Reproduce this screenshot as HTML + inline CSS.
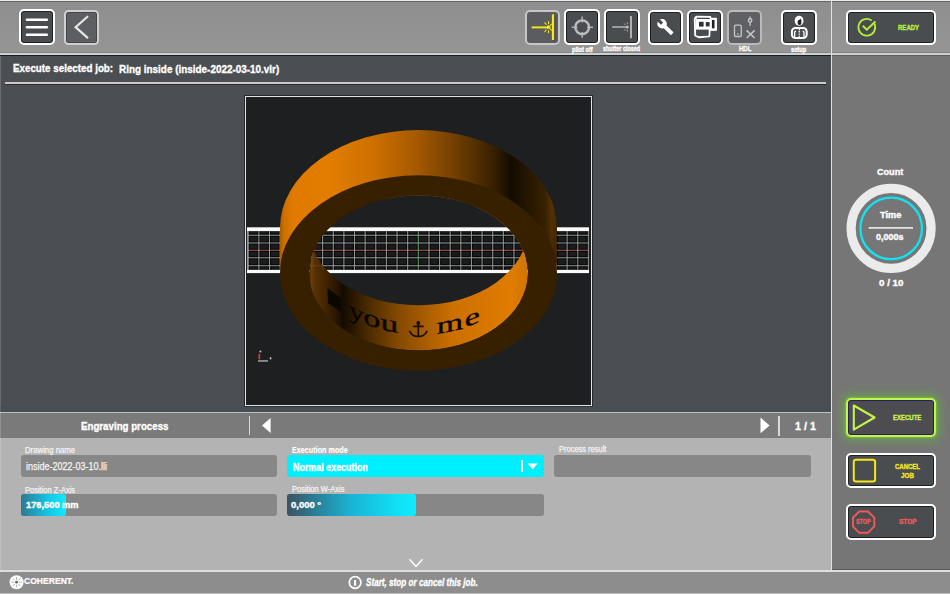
<!DOCTYPE html>
<html><head><meta charset="utf-8">
<style>
*{box-sizing:border-box;margin:0;padding:0}
html,body{width:950px;height:594px;overflow:hidden;background:#8f8f8f;font-family:"Liberation Sans",sans-serif}
.a{position:absolute}
.btn{position:absolute;border:2px solid #fff;border-radius:5px;background:#4a4d50;box-shadow:inset 0 0 0 1px #1e2022}
.dis{border:1.5px solid #c8c8c8;background:#5b5d60;box-shadow:none}
.t{position:absolute;white-space:nowrap;line-height:1;transform-origin:0 0}
</style></head><body>
<!-- header -->
<div class="a" style="left:0;top:0;width:950px;height:53px;background:linear-gradient(#8e8e8e,#959595)"></div>
<div class="a" style="left:0;top:0;width:950px;height:1px;background:#ebebeb"></div>
<div class="a" style="left:0;top:1px;width:950px;height:1px;background:#656565"></div>
<div class="a" style="left:0;top:52px;width:950px;height:1px;background:#858585"></div>
<div class="a" style="left:0;top:53px;width:950px;height:2px;background:#cdd0d0"></div>
<div class="a" style="left:0;top:55px;width:950px;height:1px;background:#1c1f22"></div>

<div class="btn" style="left:19px;top:9px;width:36px;height:36px"></div>
<div class="btn" style="left:64px;top:9.5px;width:35px;height:35.5px;background:#5d5f62;border:2px solid #cfcfcf;border-radius:4.5px;box-shadow:inset 0 0 0 1px #45474a"></div>
<div class="btn dis" style="left:525px;top:9.5px;width:35px;height:35px;background:#5a5c5f;border:2px solid #c6c6c6"></div>
<div class="btn" style="left:564px;top:9px;width:36px;height:36px"></div>
<div class="btn" style="left:604px;top:9px;width:36px;height:36px"></div>
<div class="btn" style="left:648px;top:9.5px;width:35px;height:35.5px"></div>
<div class="btn" style="left:687px;top:9.5px;width:35.5px;height:35.5px"></div>
<div class="btn dis" style="left:727px;top:9.5px;width:35px;height:35px;background:#5e6063;border:2px solid #bababa"></div>
<div class="btn" style="left:781px;top:9.5px;width:36px;height:35.5px"></div>
<div class="btn" style="left:846px;top:9.5px;width:90px;height:35.5px"></div>
<svg class="a" style="left:0;top:0" width="950" height="55">
  <g stroke="#fff" stroke-width="2.6" stroke-linecap="round">
    <line x1="27" y1="19.8" x2="46.8" y2="19.8"/>
    <line x1="27" y1="27.3" x2="46.8" y2="27.3"/>
    <line x1="27" y1="34.8" x2="46.8" y2="34.8"/>
  </g>
  <polyline points="87.4,16.7 75.6,27.2 87.4,37.6" fill="none" stroke="#e6e6e6" stroke-width="2.2" stroke-linecap="round"/>
  <!-- laser -->
  <g stroke="#f2e61c" fill="#f2e61c">
    <line x1="531.7" y1="27.4" x2="547" y2="27.4" stroke-width="2"/>
    <line x1="554.2" y1="14.6" x2="554.2" y2="40.4" stroke="#23236e" stroke-width="2.2"/>
    <line x1="553.1" y1="14.3" x2="553.1" y2="40" stroke-width="2.4"/>
    <circle cx="548.5" cy="27.2" r="1.9" stroke="none"/>
    <g stroke-width="1.1" stroke-linecap="round">
      <line x1="548.5" y1="21.6" x2="548.5" y2="23.6"/>
      <line x1="548.5" y1="30.8" x2="548.5" y2="32.8"/>
      <line x1="544.8" y1="22.8" x2="546.2" y2="24.4"/>
      <line x1="544.8" y1="31.6" x2="546.2" y2="30"/>
      <line x1="551.4" y1="24.2" x2="550.4" y2="25.3"/>
      <line x1="551.4" y1="30.2" x2="550.4" y2="29.1"/>
    </g>
  </g>
  <!-- pilot crosshair -->
  <g stroke="#bdbdbd" fill="none">
    <circle cx="582.2" cy="27.3" r="6.9" stroke-width="2.4"/>
    <g stroke-width="1.3">
      <line x1="582.2" y1="16.4" x2="582.2" y2="22.5"/>
      <line x1="582.2" y1="32.1" x2="582.2" y2="37.8"/>
      <line x1="571.7" y1="27.3" x2="577.5" y2="27.3"/>
      <line x1="587" y1="27.3" x2="593" y2="27.3"/>
    </g>
  </g>
  <!-- shutter -->
  <g stroke="#bdbdbd" fill="#bdbdbd">
    <line x1="612.2" y1="27" x2="626" y2="27" stroke-width="1.4"/>
    <line x1="631" y1="15.9" x2="631" y2="38.2" stroke-width="1.8"/>
    <circle cx="627.3" cy="27" r="1.5" stroke="none"/>
    <g stroke-width="0.9">
      <line x1="627.3" y1="22.5" x2="627.3" y2="24.2"/>
      <line x1="627.3" y1="29.8" x2="627.3" y2="31.5"/>
      <line x1="624.2" y1="23.5" x2="625.4" y2="24.9"/>
      <line x1="624.2" y1="30.5" x2="625.4" y2="29.1"/>
    </g>
  </g>
  <!-- wrench -->
  <path transform="translate(656.6,18.2) scale(0.73)" fill="#fff" d="M22.7 19l-9.1-9.1c.9-2.3.4-5-1.5-6.9-2-2-5-2.4-7.4-1.3L9 6 6 9 1.6 4.7C.4 7.1.9 10.1 2.9 12.1c1.9 1.9 4.6 2.4 6.9 1.5l9.1 9.1c.4.4 1 .4 1.4 0l2.3-2.3c.5-.4.5-1.100.1-1.400z"/>
  <!-- machine -->
  <g fill="none" stroke="#fff" stroke-width="1.9" stroke-linejoin="round">
    <path d="M696.8,16.8 L710.3,16.9 L710.6,18.6 L715.9,18.6 L715.9,29.8 L709.6,29.8 L709.3,36.3 L699.2,37.3 L695.2,35.3 L694.8,19.2 Q695,17.2 696.8,16.8 Z"/>
  </g>
  <rect x="696" y="18.4" width="14.4" height="11.2" fill="#fff"/>
  <rect x="710" y="18" width="6.8" height="12.6" fill="#fff"/>
  <rect x="699" y="21.8" width="4.6" height="4.8" fill="#2e3032"/>
  <rect x="705.8" y="22.1" width="3.8" height="4.3" fill="#2e3032"/>
  <rect x="711.9" y="20" width="2.6" height="8.3" fill="#1e2022"/>
  <rect x="696.4" y="30.2" width="12" height="5.4" fill="#4a4d50"/>
  <line x1="697" y1="18.4" x2="709.6" y2="18.5" stroke="#2e3032" stroke-width="0.9"/>
  <!-- HDL -->
  <g fill="none" stroke="#c6c6c6" stroke-width="1.3">
    <rect x="734.5" y="25.2" width="6.8" height="11.3" rx="1.2"/>
    <line x1="746.6" y1="30.4" x2="754.6" y2="38" stroke-width="1.5"/>
    <line x1="754.6" y1="30.4" x2="746.6" y2="38" stroke-width="1.5"/>
    <line x1="750.1" y1="16.4" x2="750.1" y2="18.4"/>
    <line x1="750.1" y1="22.6" x2="750.1" y2="25.8"/>
    <circle cx="750.1" cy="20.5" r="1.7" stroke-width="1.4"/>
  </g>
  <rect x="737.2" y="33.2" width="1.4" height="1.4" fill="#c6c6c6"/>
  <!-- setup person -->
  <ellipse cx="799.1" cy="20.7" rx="4.4" ry="5" fill="#fff"/>
  <path d="M797.6,21.6 Q797.8,19.8 800.4,19.6 L800.6,18.6 Q801.6,19.2 801.4,21.6 L801.2,24.2 Q799.4,25.8 797.8,24.2 Z" fill="#1e2022"/>
  <rect x="791.9" y="27.9" width="14.8" height="10.2" rx="3.6" fill="none" stroke="#fff" stroke-width="2"/>
  <g stroke="#fff" stroke-width="1.3" fill="none">
    <path d="M794.6,37.4 L794.6,32.6 Q794.6,31.2 796,31.2"/>
    <path d="M804,37.4 L804,32.6 Q804,31.2 802.6,31.2"/>
    <line x1="799.3" y1="28.8" x2="799.3" y2="37.2" stroke-dasharray="1.4 0.9"/>
  </g>
  <!-- ready -->
  <path d="M874.3,23.4 A8.4,8.4 0 1 1 871.7,20.4" fill="none" stroke="#b8ee3a" stroke-width="1.8"/>
  <polyline points="862.8,25.8 866.8,29.6 875.4,21.5" fill="none" stroke="#b8ee3a" stroke-width="1.9"/>
</svg>

<!-- main area -->
<div class="a" style="left:0;top:56px;width:831px;height:356px;background:#4b4e52"></div>
<div class="a" style="left:5px;top:82px;width:821px;height:2px;background:#c8cacb"></div>
<div class="a" style="left:5px;top:84px;width:821px;height:1px;background:#2a2c2e"></div>

<!-- viewport -->
<div class="a" style="left:243.5px;top:94.5px;width:349.5px;height:312.5px;background:#26292c"></div>
<div class="a" style="left:245px;top:96px;width:346.5px;height:309.5px;border:1.5px solid #e2e2e2;background:#1e1f21"></div>
<svg class="a" style="left:247px;top:97px" width="342" height="307" viewBox="247 97 342 307">
<defs>
<linearGradient id="ow" gradientUnits="userSpaceOnUse" x1="279.5" y1="0" x2="557" y2="0">
<stop offset="0" stop-color="#a85a00"/>
<stop offset="0.016" stop-color="#cc7000"/>
<stop offset="0.049" stop-color="#e07a00"/>
<stop offset="0.182" stop-color="#e27d00"/>
<stop offset="0.341" stop-color="#cc7000"/>
<stop offset="0.499" stop-color="#a45800"/>
<stop offset="0.665" stop-color="#643800"/>
<stop offset="0.773" stop-color="#362000"/>
<stop offset="0.835" stop-color="#140c00"/>
<stop offset="0.892" stop-color="#241600"/>
<stop offset="0.957" stop-color="#3a2200"/>
<stop offset="0.982" stop-color="#5a3406"/>
<stop offset="1" stop-color="#4a2a04"/>
</linearGradient>
<linearGradient id="iw" gradientUnits="userSpaceOnUse" x1="309" y1="0" x2="528" y2="0">
<stop offset="0" stop-color="#3a2000"/>
<stop offset="0.01" stop-color="#6a3c06"/>
<stop offset="0.03" stop-color="#553004"/>
<stop offset="0.07" stop-color="#452600"/>
<stop offset="0.125" stop-color="#2a1600"/>
<stop offset="0.155" stop-color="#130b00"/>
<stop offset="0.26" stop-color="#462800"/>
<stop offset="0.411" stop-color="#864a00"/>
<stop offset="0.658" stop-color="#cc7000"/>
<stop offset="0.923" stop-color="#e07c00"/>
<stop offset="1" stop-color="#d07400"/>
</linearGradient>
<clipPath id="cin"><ellipse cx="418.5" cy="273.0" rx="109.5" ry="77.5"/></clipPath>
<linearGradient id="owd" gradientUnits="userSpaceOnUse" x1="500" y1="150" x2="557" y2="270"><stop offset="0" stop-color="#1a0d00" stop-opacity="0"/><stop offset="0.42" stop-color="#1a0d00" stop-opacity="0"/><stop offset="1" stop-color="#1a0d00" stop-opacity="0.3"/></linearGradient>
</defs>
<rect x="247" y="231" width="342" height="39" fill="#1a1c1e"/>
<line x1="247" y1="235.2" x2="589" y2="235.2" stroke="#060707" stroke-width="3.2"/>
<line x1="247" y1="243.0" x2="589" y2="243.0" stroke="#060707" stroke-width="3.2"/>
<line x1="247" y1="257.7" x2="589" y2="257.7" stroke="#060707" stroke-width="3.2"/>
<line x1="247" y1="265.8" x2="589" y2="265.8" stroke="#060707" stroke-width="3.2"/>
<line x1="247" y1="250.3" x2="589" y2="250.3" stroke="#060707" stroke-width="3.2"/>
<line x1="248.22" y1="231" x2="248.22" y2="270" stroke="#060707" stroke-width="3.2"/>
<line x1="258.85" y1="231" x2="258.85" y2="270" stroke="#060707" stroke-width="3.2"/>
<line x1="269.48" y1="231" x2="269.48" y2="270" stroke="#060707" stroke-width="3.2"/>
<line x1="280.11" y1="231" x2="280.11" y2="270" stroke="#060707" stroke-width="3.2"/>
<line x1="290.74" y1="231" x2="290.74" y2="270" stroke="#060707" stroke-width="3.2"/>
<line x1="301.37" y1="231" x2="301.37" y2="270" stroke="#060707" stroke-width="3.2"/>
<line x1="312.00" y1="231" x2="312.00" y2="270" stroke="#060707" stroke-width="3.2"/>
<line x1="322.63" y1="231" x2="322.63" y2="270" stroke="#060707" stroke-width="3.2"/>
<line x1="333.26" y1="231" x2="333.26" y2="270" stroke="#060707" stroke-width="3.2"/>
<line x1="343.89" y1="231" x2="343.89" y2="270" stroke="#060707" stroke-width="3.2"/>
<line x1="354.52" y1="231" x2="354.52" y2="270" stroke="#060707" stroke-width="3.2"/>
<line x1="365.15" y1="231" x2="365.15" y2="270" stroke="#060707" stroke-width="3.2"/>
<line x1="375.78" y1="231" x2="375.78" y2="270" stroke="#060707" stroke-width="3.2"/>
<line x1="386.41" y1="231" x2="386.41" y2="270" stroke="#060707" stroke-width="3.2"/>
<line x1="397.04" y1="231" x2="397.04" y2="270" stroke="#060707" stroke-width="3.2"/>
<line x1="407.67" y1="231" x2="407.67" y2="270" stroke="#060707" stroke-width="3.2"/>
<line x1="418.30" y1="231" x2="418.30" y2="270" stroke="#060707" stroke-width="3.2"/>
<line x1="428.93" y1="231" x2="428.93" y2="270" stroke="#060707" stroke-width="3.2"/>
<line x1="439.56" y1="231" x2="439.56" y2="270" stroke="#060707" stroke-width="3.2"/>
<line x1="450.19" y1="231" x2="450.19" y2="270" stroke="#060707" stroke-width="3.2"/>
<line x1="460.82" y1="231" x2="460.82" y2="270" stroke="#060707" stroke-width="3.2"/>
<line x1="471.45" y1="231" x2="471.45" y2="270" stroke="#060707" stroke-width="3.2"/>
<line x1="482.08" y1="231" x2="482.08" y2="270" stroke="#060707" stroke-width="3.2"/>
<line x1="492.71" y1="231" x2="492.71" y2="270" stroke="#060707" stroke-width="3.2"/>
<line x1="503.34" y1="231" x2="503.34" y2="270" stroke="#060707" stroke-width="3.2"/>
<line x1="513.97" y1="231" x2="513.97" y2="270" stroke="#060707" stroke-width="3.2"/>
<line x1="524.60" y1="231" x2="524.60" y2="270" stroke="#060707" stroke-width="3.2"/>
<line x1="535.23" y1="231" x2="535.23" y2="270" stroke="#060707" stroke-width="3.2"/>
<line x1="545.86" y1="231" x2="545.86" y2="270" stroke="#060707" stroke-width="3.2"/>
<line x1="556.49" y1="231" x2="556.49" y2="270" stroke="#060707" stroke-width="3.2"/>
<line x1="567.12" y1="231" x2="567.12" y2="270" stroke="#060707" stroke-width="3.2"/>
<line x1="577.75" y1="231" x2="577.75" y2="270" stroke="#060707" stroke-width="3.2"/>
<line x1="588.38" y1="231" x2="588.38" y2="270" stroke="#060707" stroke-width="3.2"/>
<line x1="247" y1="235.2" x2="589" y2="235.2" stroke="#959595" stroke-width="1.05"/>
<line x1="247" y1="243.0" x2="589" y2="243.0" stroke="#959595" stroke-width="1.05"/>
<line x1="247" y1="257.7" x2="589" y2="257.7" stroke="#959595" stroke-width="1.05"/>
<line x1="247" y1="265.8" x2="589" y2="265.8" stroke="#959595" stroke-width="1.05"/>
<line x1="247" y1="250.3" x2="589" y2="250.3" stroke="#b05a5a" stroke-width="1.05"/>
<line x1="248.22" y1="231" x2="248.22" y2="270" stroke="#959595" stroke-width="1.05"/>
<line x1="258.85" y1="231" x2="258.85" y2="270" stroke="#959595" stroke-width="1.05"/>
<line x1="269.48" y1="231" x2="269.48" y2="270" stroke="#959595" stroke-width="1.05"/>
<line x1="280.11" y1="231" x2="280.11" y2="270" stroke="#959595" stroke-width="1.05"/>
<line x1="290.74" y1="231" x2="290.74" y2="270" stroke="#959595" stroke-width="1.05"/>
<line x1="301.37" y1="231" x2="301.37" y2="270" stroke="#959595" stroke-width="1.05"/>
<line x1="312.00" y1="231" x2="312.00" y2="270" stroke="#959595" stroke-width="1.05"/>
<line x1="322.63" y1="231" x2="322.63" y2="270" stroke="#959595" stroke-width="1.05"/>
<line x1="333.26" y1="231" x2="333.26" y2="270" stroke="#959595" stroke-width="1.05"/>
<line x1="343.89" y1="231" x2="343.89" y2="270" stroke="#959595" stroke-width="1.05"/>
<line x1="354.52" y1="231" x2="354.52" y2="270" stroke="#959595" stroke-width="1.05"/>
<line x1="365.15" y1="231" x2="365.15" y2="270" stroke="#959595" stroke-width="1.05"/>
<line x1="375.78" y1="231" x2="375.78" y2="270" stroke="#959595" stroke-width="1.05"/>
<line x1="386.41" y1="231" x2="386.41" y2="270" stroke="#959595" stroke-width="1.05"/>
<line x1="397.04" y1="231" x2="397.04" y2="270" stroke="#959595" stroke-width="1.05"/>
<line x1="407.67" y1="231" x2="407.67" y2="270" stroke="#959595" stroke-width="1.05"/>
<line x1="418.30" y1="231" x2="418.30" y2="270" stroke="#5ea060" stroke-width="1.05"/>
<line x1="428.93" y1="231" x2="428.93" y2="270" stroke="#959595" stroke-width="1.05"/>
<line x1="439.56" y1="231" x2="439.56" y2="270" stroke="#959595" stroke-width="1.05"/>
<line x1="450.19" y1="231" x2="450.19" y2="270" stroke="#959595" stroke-width="1.05"/>
<line x1="460.82" y1="231" x2="460.82" y2="270" stroke="#959595" stroke-width="1.05"/>
<line x1="471.45" y1="231" x2="471.45" y2="270" stroke="#959595" stroke-width="1.05"/>
<line x1="482.08" y1="231" x2="482.08" y2="270" stroke="#959595" stroke-width="1.05"/>
<line x1="492.71" y1="231" x2="492.71" y2="270" stroke="#959595" stroke-width="1.05"/>
<line x1="503.34" y1="231" x2="503.34" y2="270" stroke="#959595" stroke-width="1.05"/>
<line x1="513.97" y1="231" x2="513.97" y2="270" stroke="#959595" stroke-width="1.05"/>
<line x1="524.60" y1="231" x2="524.60" y2="270" stroke="#959595" stroke-width="1.05"/>
<line x1="535.23" y1="231" x2="535.23" y2="270" stroke="#959595" stroke-width="1.05"/>
<line x1="545.86" y1="231" x2="545.86" y2="270" stroke="#959595" stroke-width="1.05"/>
<line x1="556.49" y1="231" x2="556.49" y2="270" stroke="#959595" stroke-width="1.05"/>
<line x1="567.12" y1="231" x2="567.12" y2="270" stroke="#959595" stroke-width="1.05"/>
<line x1="577.75" y1="231" x2="577.75" y2="270" stroke="#959595" stroke-width="1.05"/>
<line x1="588.38" y1="231" x2="588.38" y2="270" stroke="#959595" stroke-width="1.05"/>
<line x1="247.6" y1="231" x2="247.6" y2="270" stroke="#9c9c9c" stroke-width="1.1"/>
<rect x="247" y="227.3" width="342" height="3.8" fill="#fafafa"/>
<rect x="247" y="269.9" width="342" height="3.2" fill="#fafafa"/>
<path d="M280.0,273.0 L280.0,227.8 A138.5,97.7 0 0 1 557.0,227.8 L557.0,273.0 A138.5,96.2 0 0 0 280.0,273.0 Z" fill="url(#ow)"/>
<path d="M280.0,273.0 L280.0,227.8 A138.5,97.7 0 0 1 557.0,227.8 L557.0,273.0 A138.5,96.2 0 0 0 280.0,273.0 Z" fill="url(#owd)"/>
<path d="M280.0,273.0 A138.5,97.7 0 1 0 557.0,273.0 A138.5,97.7 0 1 0 280.0,273.0 Z M309.0,273.0 A109.5,77.5 0 1 0 528.0,273.0 A109.5,77.5 0 1 0 309.0,273.0 Z" fill="#372000" fill-rule="evenodd"/>
<g clip-path="url(#cin)"><path d="M309.0,273.0 A109.5,77.5 0 1 0 528.0,273.0 A109.5,77.5 0 1 0 309.0,273.0 Z M309.0,227.8 A109.5,77.5 0 1 0 528.0,227.8 A109.5,77.5 0 1 0 309.0,227.8 Z" fill="url(#iw)" fill-rule="evenodd"/></g>
<g clip-path="url(#cin)" opacity="0.18"><rect x="247" y="227.3" width="342" height="45.8" fill="none"/><line x1="247" y1="235.2" x2="589" y2="235.2" stroke="#959595" stroke-width="1.05"/><line x1="247" y1="243.0" x2="589" y2="243.0" stroke="#959595" stroke-width="1.05"/><line x1="247" y1="257.7" x2="589" y2="257.7" stroke="#959595" stroke-width="1.05"/><line x1="247" y1="265.8" x2="589" y2="265.8" stroke="#959595" stroke-width="1.05"/><line x1="247" y1="250.3" x2="589" y2="250.3" stroke="#b05a5a" stroke-width="1.05"/><line x1="248.22" y1="231" x2="248.22" y2="270" stroke="#959595" stroke-width="1.05"/><line x1="258.85" y1="231" x2="258.85" y2="270" stroke="#959595" stroke-width="1.05"/><line x1="269.48" y1="231" x2="269.48" y2="270" stroke="#959595" stroke-width="1.05"/><line x1="280.11" y1="231" x2="280.11" y2="270" stroke="#959595" stroke-width="1.05"/><line x1="290.74" y1="231" x2="290.74" y2="270" stroke="#959595" stroke-width="1.05"/><line x1="301.37" y1="231" x2="301.37" y2="270" stroke="#959595" stroke-width="1.05"/><line x1="312.00" y1="231" x2="312.00" y2="270" stroke="#959595" stroke-width="1.05"/><line x1="322.63" y1="231" x2="322.63" y2="270" stroke="#959595" stroke-width="1.05"/><line x1="333.26" y1="231" x2="333.26" y2="270" stroke="#959595" stroke-width="1.05"/><line x1="343.89" y1="231" x2="343.89" y2="270" stroke="#959595" stroke-width="1.05"/><line x1="354.52" y1="231" x2="354.52" y2="270" stroke="#959595" stroke-width="1.05"/><line x1="365.15" y1="231" x2="365.15" y2="270" stroke="#959595" stroke-width="1.05"/><line x1="375.78" y1="231" x2="375.78" y2="270" stroke="#959595" stroke-width="1.05"/><line x1="386.41" y1="231" x2="386.41" y2="270" stroke="#959595" stroke-width="1.05"/><line x1="397.04" y1="231" x2="397.04" y2="270" stroke="#959595" stroke-width="1.05"/><line x1="407.67" y1="231" x2="407.67" y2="270" stroke="#959595" stroke-width="1.05"/><line x1="418.30" y1="231" x2="418.30" y2="270" stroke="#5ea060" stroke-width="1.05"/><line x1="428.93" y1="231" x2="428.93" y2="270" stroke="#959595" stroke-width="1.05"/><line x1="439.56" y1="231" x2="439.56" y2="270" stroke="#959595" stroke-width="1.05"/><line x1="450.19" y1="231" x2="450.19" y2="270" stroke="#959595" stroke-width="1.05"/><line x1="460.82" y1="231" x2="460.82" y2="270" stroke="#959595" stroke-width="1.05"/><line x1="471.45" y1="231" x2="471.45" y2="270" stroke="#959595" stroke-width="1.05"/><line x1="482.08" y1="231" x2="482.08" y2="270" stroke="#959595" stroke-width="1.05"/><line x1="492.71" y1="231" x2="492.71" y2="270" stroke="#959595" stroke-width="1.05"/><line x1="503.34" y1="231" x2="503.34" y2="270" stroke="#959595" stroke-width="1.05"/><line x1="513.97" y1="231" x2="513.97" y2="270" stroke="#959595" stroke-width="1.05"/><line x1="524.60" y1="231" x2="524.60" y2="270" stroke="#959595" stroke-width="1.05"/><line x1="535.23" y1="231" x2="535.23" y2="270" stroke="#959595" stroke-width="1.05"/><line x1="545.86" y1="231" x2="545.86" y2="270" stroke="#959595" stroke-width="1.05"/><line x1="556.49" y1="231" x2="556.49" y2="270" stroke="#959595" stroke-width="1.05"/><line x1="567.12" y1="231" x2="567.12" y2="270" stroke="#959595" stroke-width="1.05"/><line x1="577.75" y1="231" x2="577.75" y2="270" stroke="#959595" stroke-width="1.05"/><line x1="588.38" y1="231" x2="588.38" y2="270" stroke="#959595" stroke-width="1.05"/></g>
<text transform="translate(356.40,320.02) skewY(25.84) scale(0.9,0.72)" text-anchor="middle" font-family="Liberation Serif" font-size="33" fill="#0a0600" stroke="#0a0600" stroke-width="0.5">y</text>
<text transform="translate(372.00,326.31) skewY(18.25) scale(1.02,0.72)" text-anchor="middle" font-family="Liberation Serif" font-size="33" fill="#0a0600" stroke="#0a0600" stroke-width="0.5">o</text>
<text transform="translate(389.50,331.15) skewY(10.93) scale(1.08,0.72)" text-anchor="middle" font-family="Liberation Serif" font-size="33" fill="#0a0600" stroke="#0a0600" stroke-width="0.5">u</text>
<text transform="translate(450.00,331.35) skewY(-11.93) scale(1.03,0.72)" text-anchor="middle" font-family="Liberation Serif" font-size="33" fill="#0a0600" stroke="#0a0600" stroke-width="0.5">m</text>
<text transform="translate(472.20,324.70) skewY(-21.59) scale(1.03,0.72)" text-anchor="middle" font-family="Liberation Serif" font-size="33" fill="#0a0600" stroke="#0a0600" stroke-width="0.5">e</text>
<polygon points="327.6,288.1 341.2,298.2 341.2,312.3 328,303.2" fill="#0c0700"/>
<g transform="translate(418.3,334.59987156220393) skewY(0.07)" fill="none" stroke="#1a0e00" stroke-width="1.7" stroke-linecap="round"><circle cx="0" cy="-11.6" r="1.1"/><line x1="0" y1="-10.5" x2="0" y2="0.6"/><line x1="-4.6" y1="-8.2" x2="4.6" y2="-8.2"/><path d="M-8.6,-3.2 Q-5.6,2.4 0,1.8 Q5.6,2.4 8.6,-3.2"/></g>
<g><circle cx="260.4" cy="351.4" r="1" fill="#c0c0c0"/><rect x="258.6" y="354" width="1.5" height="5.4" fill="#f04a14"/><rect x="258" y="360.3" width="10" height="1.3" fill="#b8b8b8"/><rect x="269.8" y="357.3" width="1.5" height="2" fill="#d0d0d0"/></g></svg>

<!-- engraving bar -->
<div class="a" style="left:0;top:412px;width:831px;height:1px;background:#bfc1c2"></div>
<div class="a" style="left:0;top:413px;width:831px;height:25px;background:#7a7a7a"></div>
<div class="a" style="left:248.5px;top:416px;width:1.8px;height:19px;background:#d8d8d8"></div>
<div class="a" style="left:777.8px;top:416px;width:1.8px;height:20px;background:#d8d8d8"></div>
<svg class="a" style="left:0;top:412px" width="831" height="26">
  <polygon points="270.6,6 262,13.5 270.6,21" fill="#fff"/>
  <polygon points="760.5,5.6 769.6,13.4 760.5,21.3" fill="#fff"/>
</svg>

<!-- form -->
<div class="a" style="left:0;top:438px;width:831px;height:132px;background:#b3b3b3"></div>
<div class="a" style="left:20.5px;top:455px;width:256.5px;height:22px;border-radius:3px;background:#878787"></div>
<div class="a" style="left:287px;top:454.8px;width:257px;height:22.2px;border-radius:3px;background:#00effe"></div>
<div class="a" style="left:521.2px;top:460px;width:1.4px;height:11.6px;background:#fff"></div>
<svg class="a" style="left:527px;top:463px" width="12" height="7"><polygon points="0.6,0.6 10.7,0.6 5.65,6.2" fill="#fff"/></svg>
<div class="a" style="left:554px;top:455px;width:256.5px;height:22px;border-radius:3px;background:#878787"></div>
<div class="a" style="left:20.5px;top:494px;width:256.5px;height:22px;border-radius:3px;background:#878787"></div>
<div class="a" style="left:20.5px;top:494px;width:45.5px;height:22px;border-radius:3px;background:linear-gradient(90deg,#2e7890,#16c0de 55%,#10ecfc)"></div>
<div class="a" style="left:287px;top:494px;width:256.5px;height:22px;border-radius:3px;background:#878787"></div>
<div class="a" style="left:287px;top:494.3px;width:129px;height:21.7px;border-radius:3px;background:linear-gradient(90deg,#3d5260,#2a7e98 22%,#1ab4d4 50%,#10e0f6 85%,#10ecfc)"></div>
<svg class="a" style="left:408px;top:557px" width="16" height="12"><polyline points="1.5,2.2 8,9.4 14.5,2.2" fill="none" stroke="#fff" stroke-width="1.4"/></svg>

<div class="a" style="left:0;top:56px;width:1px;height:514px;background:rgba(255,255,255,0.17)"></div>
<div class="a" style="left:0;top:406px;width:831px;height:6px;background:rgba(60,80,90,0.25)"></div>
<!-- sidebar -->
<div class="a" style="left:832px;top:55px;width:118px;height:515px;background:#767676"></div>
<div class="a" style="left:832px;top:55px;width:118px;height:1px;background:#5e5e5e"></div>
<div class="a" style="left:832px;top:568.5px;width:118px;height:1.5px;background:#5a5a5a"></div>
<div class="a" style="left:831px;top:0;width:1px;height:571px;background:#e2e2e2"></div>
<svg class="a" style="left:832px;top:170px" width="118" height="120">
  <circle cx="59.1" cy="58.4" r="40" fill="none" stroke="#ebebeb" stroke-width="9.2"/>
  <circle cx="59.2" cy="58.4" r="30.8" fill="none" stroke="#12e2f2" stroke-width="2.3"/>
  <line x1="36.8" y1="57.9" x2="81" y2="57.9" stroke="#e6e6e6" stroke-width="1.6"/>
</svg>

<!-- execute -->
<div class="a" style="left:846px;top:398px;width:90px;height:39px;border-radius:5px;box-shadow:0 0 2px 1px rgba(105,205,50,0.8),0 0 9px 5px rgba(100,185,60,0.45)"></div>
<div class="a" style="left:846px;top:398px;width:90px;height:39px;border:2px solid #c4f24e;border-radius:5px;background:#4d4d51;box-shadow:inset 0 0 0 1px #2c1e5c"></div>
<svg class="a" style="left:846px;top:398px" width="90" height="39">
  <polygon points="7.8,7.5 28.6,19.5 7.8,31.6" fill="none" stroke="#c4f24e" stroke-width="2.1" stroke-linejoin="round"/>
</svg>

<!-- cancel -->
<div class="btn" style="left:846px;top:452.5px;width:90.2px;height:35.5px"></div>
<svg class="a" style="left:846px;top:452px" width="90" height="36">
  <rect x="7.8" y="7.8" width="21.3" height="21.7" rx="2.2" fill="none" stroke="#f5e71c" stroke-width="2"/>
</svg>

<!-- stop -->
<div class="btn" style="left:846px;top:504px;width:90px;height:35.7px"></div>
<svg class="a" style="left:846px;top:504px" width="90" height="36">
  <polygon points="13.2,7.5 21.9,7.5 28.3,13.6 28.3,22.4 21.9,28.8 13.2,28.8 7,22.4 7,13.6" fill="none" stroke="#f05a5a" stroke-width="1.9"/>
</svg>

<!-- status bar -->
<div class="a" style="left:0;top:570px;width:950px;height:2px;background:#dedede"></div>
<div class="a" style="left:0;top:572px;width:950px;height:22px;background:#8d8d8d"></div>
<div class="a" style="left:0;top:593px;width:950px;height:1px;background:#bdbdbd"></div>
<svg class="a" style="left:0;top:572px" width="950" height="22">
  <circle cx="16.6" cy="10.2" r="7" fill="#fff"/>
  <g stroke="#9a9a9a" stroke-width="0.8">
    <line x1="16.6" y1="5" x2="16.6" y2="7.8"/><line x1="16.6" y1="12.6" x2="16.6" y2="15.4"/>
    <line x1="11.4" y1="10.2" x2="14.2" y2="10.2"/><line x1="19" y1="10.2" x2="21.8" y2="10.2"/>
    <line x1="12.9" y1="6.5" x2="14.9" y2="8.5"/><line x1="18.3" y1="11.9" x2="20.3" y2="13.9"/>
    <line x1="20.3" y1="6.5" x2="18.3" y2="8.5"/><line x1="14.9" y1="11.9" x2="12.9" y2="13.9"/>
  </g>
  <circle cx="16.6" cy="10.2" r="1.4" fill="#666"/>
  <circle cx="355.1" cy="10.5" r="5.8" fill="none" stroke="#fff" stroke-width="1.7"/>
  <rect x="354.1" y="8" width="2" height="5.8" fill="#fff"/>
</svg>
<div class="t" id="t1" style="left:12.59px;top:63.25px;font-size:11.00px;color:#fff;font-weight:bold;-webkit-text-stroke:0.35px #fff;transform:scaleX(0.890)">Execute selected job:</div>
<div class="t" id="t2" style="left:119.29px;top:64.03px;font-size:11.00px;color:#fff;font-weight:bold;-webkit-text-stroke:0.35px #fff;transform:scaleX(0.901)">Ring inside (inside-2022-03-10.vlr)</div>
<div class="t" id="t3" style="left:80.74px;top:420.74px;font-size:11.00px;color:#fff;font-weight:bold;-webkit-text-stroke:0.35px #fff;transform:scaleX(0.883)">Engraving process</div>
<div class="t" id="t4" style="left:794.96px;top:421.48px;font-size:11.00px;color:#fff;font-weight:bold;-webkit-text-stroke:0.35px #fff;transform:scaleX(0.983)">1 / 1</div>
<div class="t" id="t5" style="left:24.65px;top:445.82px;font-size:8.40px;color:#f4f4f4;-webkit-text-stroke:0.25px #f4f4f4;transform:scaleX(0.928)">Drawing name</div>
<div class="t" id="t6" style="left:25.63px;top:462.10px;font-size:10.00px;color:#f4f4f4;-webkit-text-stroke:0.25px #f4f4f4;transform:scaleX(0.899)">inside-2022-03-10.lli</div>
<div class="t" id="t7" style="left:291.63px;top:446.08px;font-size:8.40px;color:#fff;font-weight:bold;-webkit-text-stroke:0.15px #fff;transform:scaleX(0.862)">Execution mode</div>
<div class="t" id="t8" style="left:292.74px;top:463.18px;font-size:10.00px;color:#fff;font-weight:bold;-webkit-text-stroke:0.35px #fff;transform:scaleX(0.892)">Normal execution</div>
<div class="t" id="t9" style="left:558.61px;top:445.13px;font-size:8.40px;color:#f4f4f4;-webkit-text-stroke:0.25px #f4f4f4;transform:scaleX(0.893)">Process result</div>
<div class="t" id="t10" style="left:24.68px;top:485.57px;font-size:8.40px;color:#f4f4f4;-webkit-text-stroke:0.25px #f4f4f4;transform:scaleX(0.897)">Position Z-Axis</div>
<div class="t" id="t11" style="left:25.93px;top:501.14px;font-size:9.20px;color:#fff;font-weight:bold;-webkit-text-stroke:0.35px #fff;transform:scaleX(1.010)">176,500 mm</div>
<div class="t" id="t12" style="left:291.71px;top:485.07px;font-size:8.40px;color:#f4f4f4;-webkit-text-stroke:0.25px #f4f4f4;transform:scaleX(0.896)">Position W-Axis</div>
<div class="t" id="t13" style="left:291.39px;top:501.05px;font-size:9.20px;color:#fff;font-weight:bold;-webkit-text-stroke:0.35px #fff;transform:scaleX(1.031)">0,000 °</div>
<div class="t" id="t14" style="left:877.43px;top:168.44px;font-size:9.00px;color:#fff;font-weight:bold;-webkit-text-stroke:0.35px #fff;transform:scaleX(1.008)">Count</div>
<div class="t" id="t15" style="left:880.06px;top:211.27px;font-size:9.00px;color:#fff;font-weight:bold;-webkit-text-stroke:0.35px #fff;transform:scaleX(1.033)">Time</div>
<div class="t" id="t16" style="left:876.19px;top:233.00px;font-size:9.00px;color:#fff;font-weight:bold;-webkit-text-stroke:0.35px #fff;transform:scaleX(1.002)">0,000s</div>
<div class="t" id="t17" style="left:878.90px;top:279.41px;font-size:9.00px;color:#fff;font-weight:bold;-webkit-text-stroke:0.35px #fff;transform:scaleX(1.089)">0 / 10</div>
<div class="t" id="t18" style="left:893.21px;top:413.90px;font-size:7.00px;color:#c4f24e;font-weight:bold;-webkit-text-stroke:0.35px #c4f24e;transform:scaleX(0.856)">EXECUTE</div>
<div class="t" id="t19" style="left:894.81px;top:462.94px;font-size:7.00px;color:#f5e71c;font-weight:bold;-webkit-text-stroke:0.35px #f5e71c;transform:scaleX(0.855)">CANCEL</div>
<div class="t" id="t20" style="left:900.82px;top:471.78px;font-size:7.00px;color:#f5e71c;font-weight:bold;-webkit-text-stroke:0.35px #f5e71c;transform:scaleX(0.899)">JOB</div>
<div class="t" id="t21" style="left:898.71px;top:517.55px;font-size:7.00px;color:#f05a5a;font-weight:bold;-webkit-text-stroke:0.35px #f05a5a;transform:scaleX(0.927)">STOP</div>
<div class="t" id="t22" style="left:897.58px;top:24.80px;font-size:6.80px;color:#b8ee3a;font-weight:bold;-webkit-text-stroke:0.35px #b8ee3a;transform:scaleX(0.889)">READY</div>
<div class="t" id="t23" style="left:571.82px;top:46.59px;font-size:6.60px;color:#fff;font-weight:bold;-webkit-text-stroke:0.3px #fff;transform:scaleX(0.859)">pilot off</div>
<div class="t" id="t24" style="left:603.02px;top:46.09px;font-size:6.60px;color:#fff;font-weight:bold;-webkit-text-stroke:0.3px #fff;transform:scaleX(0.824)">shutter closed</div>
<div class="t" id="t25" style="left:738.69px;top:46.11px;font-size:6.60px;color:#fff;font-weight:bold;-webkit-text-stroke:0.3px #fff;transform:scaleX(0.906)">HDL</div>
<div class="t" id="t26" style="left:791.23px;top:47.01px;font-size:6.60px;color:#fff;font-weight:bold;-webkit-text-stroke:0.3px #fff;transform:scaleX(0.864)">setup</div>
<div class="t" id="t27" style="left:24.41px;top:578.39px;font-size:8.20px;color:#fff;font-weight:bold;-webkit-text-stroke:0.2px #fff;transform:scaleX(1.046)">COHERENT.</div>
<div class="t" id="t28" style="left:365.57px;top:577.27px;font-size:10.50px;color:#fff;font-weight:bold;-webkit-text-stroke:0.35px #fff;font-style:italic;transform:scaleX(0.775)">Start, stop or cancel this job.</div>
<div class="t" id="t29" style="left:856.45px;top:519.07px;font-size:6.80px;color:#f05a5a;font-weight:bold;-webkit-text-stroke:0.35px #f05a5a;transform:scaleX(0.793)">STOP</div>
</body></html>
